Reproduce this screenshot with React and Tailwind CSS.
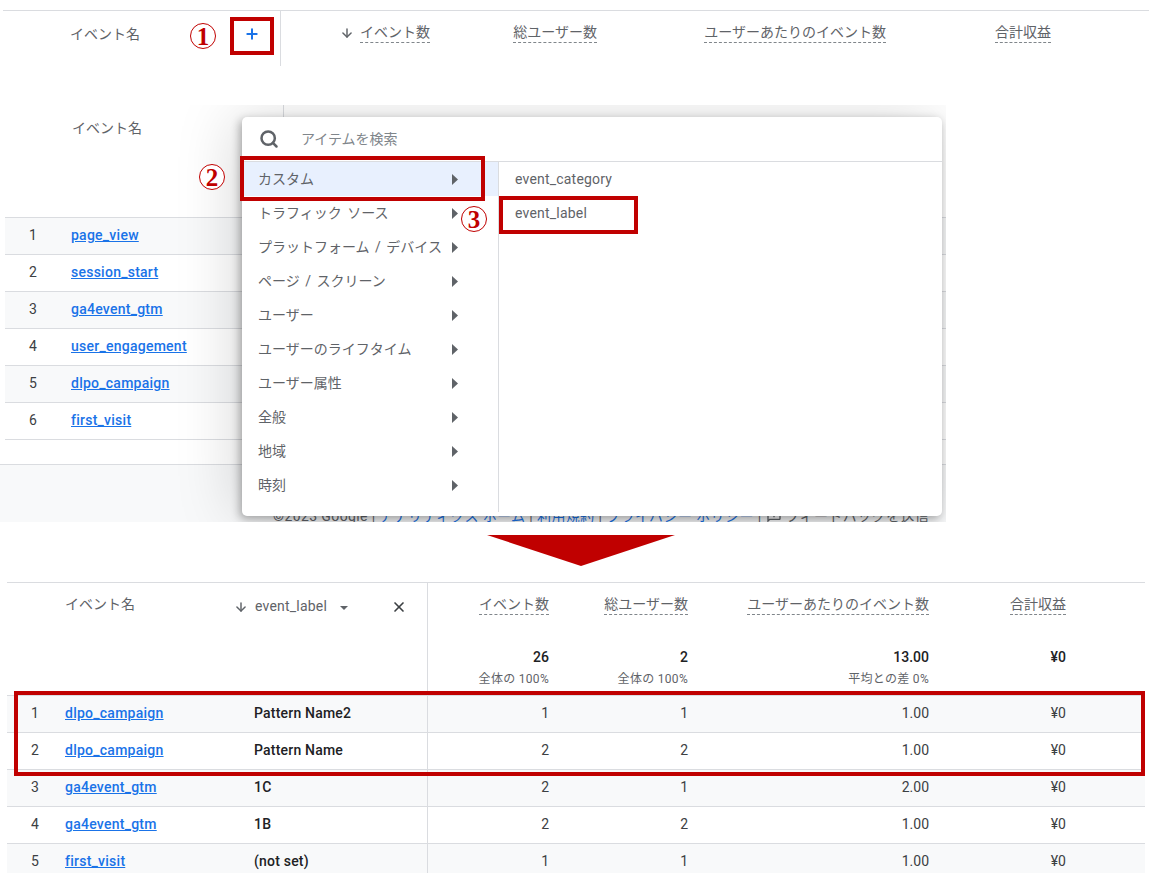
import { ArrowDown, Plus, Search, X } from 'lucide-react'
import { MdOutlineFeedback } from 'react-icons/md'

const MENU_ITEMS = [
  'カスタム',
  'トラフィック ソース',
  'プラットフォーム / デバイス',
  'ページ / スクリーン',
  'ユーザー',
  'ユーザーのライフタイム',
  'ユーザー属性',
  '全般',
  '地域',
  '時刻',
]

const EVENTS = ['page_view', 'session_start', 'ga4event_gtm', 'user_engagement', 'dlpo_campaign', 'first_visit']

const ROWS = [
  { name: 'dlpo_campaign', label: 'Pattern Name2', count: '1', users: '1', avg: '1.00' },
  { name: 'dlpo_campaign', label: 'Pattern Name', count: '2', users: '2', avg: '1.00' },
  { name: 'ga4event_gtm', label: '1C', count: '2', users: '1', avg: '2.00' },
  { name: 'ga4event_gtm', label: '1B', count: '2', users: '2', avg: '1.00' },
  { name: 'first_visit', label: '(not set)', count: '1', users: '1', avg: '1.00' },
]

const GRID = 'grid grid-cols-[58px_189px_174px_121px_139px_241px_137px_1fr]'

function Dashed({ children }) {
  return <span className="border-b border-dashed border-[#80868b] pb-[2px] leading-4 text-[#5f6368]">{children}</span>
}

function Circled({ children, className }) {
  return (
    <span className={`absolute z-20 flex h-[26px] w-[26px] items-center justify-center rounded-full border border-[#c00000] bg-white font-['Liberation_Serif',serif] text-[25px] leading-none font-bold text-[#c00000] ${className}`}>
      {children}
    </span>
  )
}

function RedBox({ className }) {
  return <div className={`pointer-events-none absolute z-20 border-4 border-[#c00000] ${className}`} />
}

function Caret() {
  return (
    <svg width="6" height="11" viewBox="0 0 6 11" className="shrink-0">
      <polygon points="0,0 6,5.5 0,11" fill="#5f6368" />
    </svg>
  )
}

function TopHeader() {
  return (
    <div className="mt-[10px] ml-[3px] flex h-[56px] border-t border-[#dadce0] text-sm">
      <div className="w-[278px] border-r border-[#dadce0] pt-[13px] pl-[67px] leading-5 text-[#5f6368]">
        <span>イベント名</span>
        <Plus strokeWidth={3} className="absolute top-[26px] left-[244px] z-10 h-[16px] w-[16px] text-[#1a73e8]" />
      </div>
      <div className="grid grid-cols-[149px_167px_289px_165px] items-start pt-[13px]">
        <div className="flex items-start justify-end gap-[6px]">
          <ArrowDown strokeWidth={2.5} className="mt-[2px] h-[14px] w-[14px] text-[#5f6368]" />
          <Dashed>イベント数</Dashed>
        </div>
        <div className="flex justify-end"><Dashed>総ユーザー数</Dashed></div>
        <div className="flex justify-end"><Dashed>ユーザーあたりのイベント数</Dashed></div>
        <div className="flex justify-end"><Dashed>合計収益</Dashed></div>
      </div>
    </div>
  )
}

function MenuPanel() {
  return (
    <div className="absolute top-[12px] left-[242px] z-10 h-[399px] w-[700px] rounded-[5px] bg-white text-sm text-[#5f6368] shadow-[-2px_3px_10px_rgba(0,0,0,0.32),-8px_0_60px_rgba(0,0,0,0.15)]">
      <div className="flex h-[45px] items-center border-b border-[#dadce0] pb-px pl-[17px]">
        <Search strokeWidth={3} className="h-[20px] w-[20px] text-[#5f6368]" />
        <span className="ml-[22px] text-[#80868b]">アイテムを検索</span>
      </div>
      <div className="flex h-[350px]">
        <div className="w-[257px] border-r border-[#dadce0]">
          {MENU_ITEMS.map((item, i) => (
            <div key={item} className={`flex h-[34px] items-center justify-between pr-[40px] pl-[16px] [word-spacing:2px] ${i === 0 ? 'bg-[#e8f0fe]' : ''}`}>
              <span>{item}</span>
              <Caret />
            </div>
          ))}
        </div>
        <div className="pl-[16px] tracking-[0.2px]">
          <div className="flex h-[34px] items-center">event_category</div>
          <div className="flex h-[34px] items-center">event_label</div>
        </div>
      </div>
    </div>
  )
}

function MiddleShot() {
  return (
    <div className="relative mt-[39px] h-[417px] w-[946px] overflow-hidden bg-white text-sm">
      <div className="ml-[5px] flex h-[113px] border-b border-[#dadce0]">
        <div className="w-[279px] border-r border-[#dadce0] pt-[13px] pl-[67px] leading-5 text-[#5f6368]">イベント名</div>
      </div>
      <div className="ml-[5px]">
        {EVENTS.map((name, i) => (
          <div key={name} className={`flex h-[37px] items-center border-b border-[#dadce0] pb-[2px] ${i % 2 === 0 ? 'bg-[#f8f9fa]' : 'bg-white'}`}>
            <span className="w-[66px] pl-[24px] text-[#3c4043]">{i + 1}</span>
            <a className="font-medium tracking-[0.25px] text-[#1a73e8] underline">{name}</a>
          </div>
        ))}
      </div>
      <div className="mt-[24px] flex h-[58px] items-start border-t border-[#dadce0] bg-[#f8f9fa] pt-[41px] pl-[273px] tracking-[0.4px] whitespace-nowrap text-[#5f6368]">
        <span>©2023 Google | <span className="text-[#1a73e8]">アナリティクス ホーム</span> | <span className="text-[#1a73e8]">利用規約</span> | <span className="text-[#1a73e8]">プライバシー ポリシー</span> | </span>
        <MdOutlineFeedback className="mx-[4px] mt-[2px] h-[16px] w-[16px]" />
        <span>フィードバックを送信</span>
      </div>
      <MenuPanel />
    </div>
  )
}

function BottomTable() {
  return (
    <div className="mt-[16px] ml-[7px] w-[1138px] border-t border-[#dadce0] text-sm">
      <div className={`${GRID} h-[113px] border-b border-[#dadce0]`}>
        <div className="col-span-2 pt-[11px] pl-[58px] leading-5 text-[#5f6368]">イベント名</div>
        <div className="flex h-full items-start border-r border-[#dadce0] pt-[13px] text-[#5f6368]">
          <ArrowDown strokeWidth={2.5} className="mt-[4px] -ml-[20px] h-[14px] w-[14px]" />
          <span className="ml-[7px] leading-5 tracking-[0.2px]">event_label</span>
          <svg width="8" height="4" viewBox="0 0 8 4" className="mt-[10px] ml-[13px]">
            <polygon points="0,0 8,0 4,4" fill="#5f6368" />
          </svg>
          <X strokeWidth={2.5} className="mt-[3px] ml-[43px] h-[16px] w-[16px] text-[#3c4043]" />
        </div>
        {[
          ['イベント数', '26', '全体の 100%'],
          ['総ユーザー数', '2', '全体の 100%'],
          ['ユーザーあたりのイベント数', '13.00', '平均との差 0%'],
          ['合計収益', '¥0', ''],
        ].map(([title, total, sub]) => (
          <div key={title} className="pt-[13px] text-right">
            <div className="flex justify-end"><Dashed>{title}</Dashed></div>
            <div className="mt-[32px] leading-5 font-medium text-[#202124]">{total}</div>
            <div className="mt-[4px] text-xs leading-4 tracking-[0.3px] text-[#5f6368]">{sub}</div>
          </div>
        ))}
      </div>
      {ROWS.map((row, i) => (
        <div key={i} className={`${GRID} h-[37px] items-center border-b border-[#dadce0] ${i % 2 === 0 ? 'bg-[#f8f9fa]' : 'bg-white'}`}>
          <span className="-mt-[2px] pl-[24px] text-[#3c4043]">{i + 1}</span>
          <a className="-mt-[2px] font-medium tracking-[0.25px] text-[#1a73e8] underline">{row.name}</a>
          <div className="flex h-full items-center border-r border-[#dadce0] pb-[2px] font-medium tracking-[0.2px] text-[#202124]">{row.label}</div>
          <span className="-mt-[2px] text-right text-[#3c4043]">{row.count}</span>
          <span className="-mt-[2px] text-right text-[#3c4043]">{row.users}</span>
          <span className="-mt-[2px] text-right text-[#3c4043]">{row.avg}</span>
          <span className="-mt-[2px] text-right text-[#3c4043]">¥0</span>
        </div>
      ))}
    </div>
  )
}

export default function App() {
  return (
    <div className="relative h-[873px] w-[1149px] overflow-hidden bg-white font-[Roboto,'Noto_Sans_CJK_JP',sans-serif]">
      <TopHeader />
      <MiddleShot />
      <svg width="188" height="31" viewBox="0 0 188 31" className="mt-[13px] ml-[487px] block">
        <polygon points="0,0 188,0 94,31" fill="#c00000" />
      </svg>

      <BottomTable />

      <Circled className="top-[23px] left-[190px]">1</Circled>
      <Circled className="top-[164px] left-[199px]">2</Circled>
      <Circled className="top-[206px] left-[461px]">3</Circled>
      <RedBox className="top-[17px] left-[230px] h-[38px] w-[44px]" />
      <RedBox className="top-[156px] left-[240px] h-[45px] w-[245px]" />
      <RedBox className="top-[196px] left-[499px] h-[38px] w-[139px]" />
      <RedBox className="top-[691px] left-[14px] h-[85px] w-[1131px]" />
    </div>
  )
}
